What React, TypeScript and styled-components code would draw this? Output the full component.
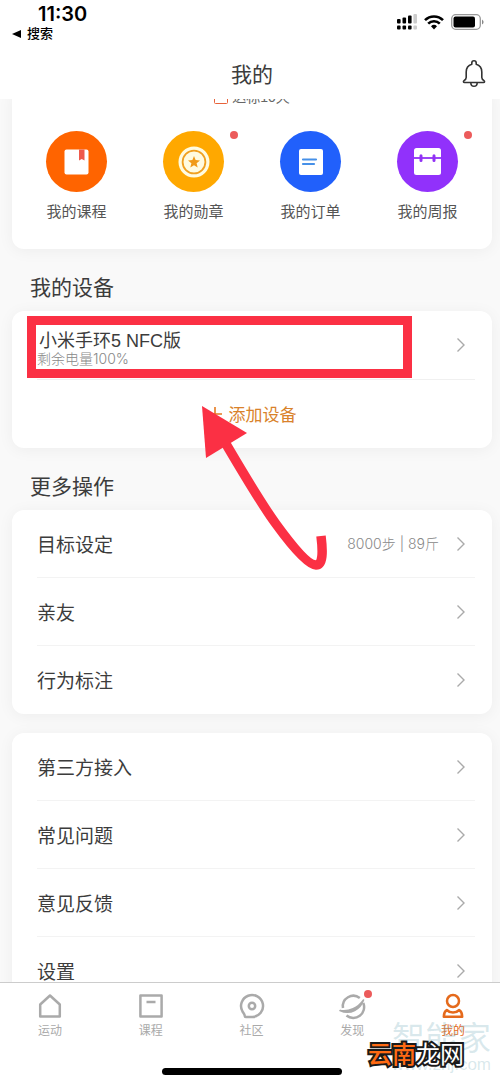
import React from 'react';
import styled, { createGlobalStyle } from 'styled-components';

const GlobalStyle = createGlobalStyle`
  *, *::before, *::after { box-sizing: border-box; }
  body {
    margin: 0;
    background: #fff;
    color: #3c3c3c;
    font-family: "Liberation Sans", "Noto Sans CJK SC", sans-serif;
  }
  button { font: inherit; color: inherit; background: none; border: 0; padding: 0; cursor: pointer; }
  a { color: inherit; text-decoration: none; }
  h1, h2, p, ul { margin: 0; padding: 0; font-weight: 400; }
  ul { list-style: none; }
  svg { display: block; flex: none; }
`;

const Screen = styled.div`
  position: relative;
  display: flex;
  flex-direction: column;
  height: 100vh;
  overflow: hidden;
`;

const StatusBar = styled.div`
  display: flex;
  justify-content: space-between;
  align-items: flex-start;
  height: 48px;
  padding: 2px 16px 0 12px;
  color: #000;
`;

const Clock = styled.div`
  padding-left: 26px;
  font: 600 20px/24px Inter, sans-serif;
`;

const BackLink = styled.a`
  display: flex;
  align-items: center;
  gap: 6px;
  font-size: 13px;
  line-height: 16px;
  font-weight: 500;
`;

const StatusIcons = styled.div`
  display: flex;
  align-items: center;
  gap: 7px;
  padding-top: 12px;
`;

const TitleBar = styled.header`
  display: grid;
  grid-template-columns: 40px 1fr 40px;
  align-items: center;
  height: 51px;
  padding: 0 6px 0 10px;
`;

const Title = styled.h1`
  grid-column: 2;
  padding-top: 2px;
  text-align: center;
  font-size: 21px;
  line-height: 30px;
`;

const BellButton = styled.button`
  display: flex;
  justify-content: center;
`;

const Content = styled.main`
  flex: 1;
  min-height: 0;
  overflow: hidden;
  padding: 0 8px 0 12px;
  background: #f9f9f9;
`;

const Card = styled.section<{ $gap?: number }>`
  position: relative;
  margin-top: ${({ $gap = 0 }) => $gap}px;
  border-radius: 12px;
  background: #fff;
  box-shadow: 0 2px 16px rgba(0, 0, 0, 0.05);
`;

const SummaryCard = styled(Card)`
  margin-top: -12px;
  padding: 0 6px 25px;
`;

const Streak = styled.p`
  display: flex;
  justify-content: center;
  align-items: center;
  gap: 4px;
  height: 20px;
  margin-bottom: 24px;
  font-size: 14px;
  line-height: 20px;
  color: #666;
`;

const Shortcuts = styled.ul`
  display: grid;
  grid-template-columns: repeat(4, 1fr);
`;

const Shortcut = styled.a`
  position: relative;
  display: flex;
  flex-direction: column;
  align-items: center;
  gap: 8px;
  font-size: 15px;
  line-height: 24px;
  color: #555;
`;

const Disc = styled.span<{ $color: string }>`
  position: relative;
  display: grid;
  place-items: center;
  width: 61px;
  height: 61px;
  border-radius: 50%;
  background: ${({ $color }) => $color};
`;

const Dot = styled.span`
  position: absolute;
  top: 0;
  right: -14px;
  width: 8px;
  height: 8px;
  border-radius: 50%;
  background: #ec5b5b;
`;

const SectionTitle = styled.h2`
  padding: 24px 0 8px 18px;
  font-size: 21px;
  line-height: 30px;
`;

const Row = styled.a`
  display: flex;
  align-items: center;
  height: 68px;
  margin: 0 17px 0 25px;
  padding-right: 9px;
  font-size: 19px;
  line-height: 28px;
  li + li > & { box-shadow: 0 -1px 0 #f3f3f3; }
`;

const RowLabel = styled.span`
  flex: 1;
  padding-top: 4px;
`;

const RowValue = styled.span`
  margin-right: 17px;
  font-family: Inter, "Noto Sans CJK SC", sans-serif;
  font-size: 14px;
  font-weight: 300;
  color: #888;
`;

const Device = styled.span`
  display: flex;
  flex: 1;
  flex-direction: column;
  padding-top: 8px;
`;

const DeviceName = styled.span`
  padding-left: 2px;
  font-size: 18px;
  line-height: 20px;
`;

const DeviceMeta = styled.span`
  font-family: Inter, "Noto Sans CJK SC", sans-serif;
  font-size: 14px;
  line-height: 16px;
  font-weight: 300;
  color: #888;
`;

const AddButton = styled.button`
  display: flex;
  justify-content: center;
  align-items: center;
  gap: 7px;
  width: 100%;
  height: 69px;
  font-size: 17px;
  color: #d9822b;
`;

const AddDivider = styled.hr`
  height: 1px;
  margin: 0 17px -1px 25px;
  border: 0;
  background: #f0f0f0;
`;

const Highlight = styled.div`
  position: absolute;
  top: 5px;
  left: 15px;
  right: 80px;
  height: 62px;
  border: 9px solid #fb3044;
  pointer-events: none;
`;

const Arrow = styled.svg`
  position: absolute;
  z-index: 2;
  top: 89px;
  left: 188px;
  pointer-events: none;
`;

const TabBar = styled.nav`
  display: flex;
  justify-content: space-between;
  height: 86px;
  padding: 9px 17px 0 20px;
  border-top: 1px solid #ccc;
`;

const Tab = styled.a<{ $active?: boolean }>`
  position: relative;
  display: flex;
  flex-direction: column;
  align-items: center;
  gap: 1px;
  width: 60px;
  font-size: 12px;
  line-height: 20px;
  color: ${({ $active }) => ($active ? '#e56a1c' : '#aaa')};
`;

const TabDot = styled(Dot)`
  top: -2px;
  right: 10px;
`;

const HomeIndicator = styled.div`
  width: 36%;
  height: 7px;
  margin: 0 auto 8px;
  border-radius: 4px;
  background: #000;
  transform: translateX(2px);
`;

const Watermark = styled.div`
  position: absolute;
  right: 9px;
  bottom: 8px;
  display: flex;
  flex-direction: column;
  align-items: flex-end;
  font-size: 33px;
  line-height: 32px;
  color: rgba(120, 175, 190, 0.28);
  pointer-events: none;
`;

const WatermarkUrl = styled.span`
  font-size: 17px;
  line-height: 20px;
`;

const Stamp = styled.div`
  position: absolute;
  right: 36px;
  bottom: 12px;
  font-size: 24px;
  line-height: 32px;
  color: #fff;
  -webkit-text-stroke: 4px #1a1a1a;
  paint-order: stroke fill;
  pointer-events: none;
`;

const StampAccent = styled.span`
  font-weight: 500;
  color: #ff6a13;
`;

const Chevron = () => (
  <svg width="10" height="16" viewBox="0 0 10 16" fill="none" stroke="#aaa" strokeWidth="1.4">
    <path d="M1.5 1.5 8 8l-6.500 6.500" />
  </svg>
);

const SignalIcon = () => (
  <svg width="20" height="16" viewBox="0 0 20 16">
    <g fill="#000">
      <rect x="0" y="5" width="3.600" height="4.500" rx="1" />
      <rect x="5.500" y="3.500" width="3.600" height="6" rx="1" />
      <rect x="11" y="1.500" width="3.600" height="8" rx="1" />
      <rect x="0" y="11.500" width="3.600" height="4" rx="1" />
      <rect x="5.500" y="11.500" width="3.600" height="4" rx="1" />
      <rect x="11" y="11.500" width="3.600" height="4" rx="1" />
    </g>
    <g fill="#ccc">
      <rect x="16.400" y="0" width="3.600" height="9.500" rx="1" />
      <rect x="16.400" y="11.500" width="3.600" height="4" rx="1" />
    </g>
  </svg>
);

const WifiIcon = () => (
  <svg width="20" height="16" viewBox="0 0 20 16" fill="none" stroke="#000" strokeWidth="2.600">
    <path d="M1 6.200a12.700 12.700 0 0 1 18 0M4.200 9.600a8.200 8.200 0 0 1 11.600 0" />
    <path d="M7 12.200a4.300 4.300 0 0 1 6 0L10 15.500z" fill="#000" stroke="none" />
  </svg>
);

const BatteryIcon = () => (
  <svg width="33" height="16" viewBox="0 0 33 16">
    <rect x="0.700" y="0.700" width="28.600" height="14.600" rx="4" fill="none" stroke="#999" strokeWidth="1.300" />
    <rect x="2.500" y="2.500" width="21.500" height="11" rx="2" fill="#000" />
    <path d="M31 5.500v5q1.600-1 1.600-2.500t-1.600-2.500z" fill="#888" />
  </svg>
);

const BellIcon = () => (
  <svg width="24" height="28" viewBox="0 0 24 28" fill="none" stroke="#333" strokeWidth="1.600" strokeLinejoin="round">
    <path d="M9.800 4.300V3a2.200 2.200 0 0 1 4.400 0v1.300c3.600 1 5.600 4 5.600 7.700v5.500c0 1.600.8 2.200 2.200 3.100.9.600.7 1.900-.5 1.900h-19c-1.200 0-1.400-1.300-.5-1.900 1.400-.9 2.200-1.500 2.200-3.100V12c0-3.700 2-6.700 5.600-7.700z" />
    <path d="M8.800 22.700c.1 2.300 1.400 3.600 3.200 3.600s3.100-1.300 3.200-3.600" />
  </svg>
);

const CourseIcon = () => (
  <svg width="25" height="26" viewBox="0 0 25 26">
    <rect x="0.500" y="0.500" width="24" height="25" rx="2" fill="#fff" />
    <path d="M15 .5h5.500v11l-2.750-1.500L15 11.500z" fill="#ef5a4c" />
  </svg>
);

const MedalIcon = () => (
  <svg width="32" height="32" viewBox="0 0 32 32">
    <circle cx="16" cy="16" r="15.500" fill="#fffbe0" />
    <circle cx="16" cy="16" r="11.400" fill="none" stroke="#f0a020" strokeWidth="1.800" />
    <path d="m16 10 1.600 4 4.400.4-3.400 2.800 1.100 4.300L16 19.200l-3.700 2.300 1.100-4.300-3.400-2.800 4.400-.4z" fill="#f09a18" />
  </svg>
);

const OrderIcon = () => (
  <svg width="24" height="26" viewBox="0 0 24 26">
    <rect width="24" height="26" rx="2" fill="#fff" />
    <path d="M4 10.500h13M4 15h11" stroke="#4690e8" strokeWidth="2.200" strokeLinecap="round" />
  </svg>
);

const ReportIcon = () => (
  <svg width="27" height="27" viewBox="0 0 27 27">
    <rect width="27" height="27" rx="2.500" fill="#fff" />
    <path d="M0 10h27" stroke="#9131f5" strokeWidth="1.800" />
    <path d="M7 7.800v4.600M20 7.800v4.600" stroke="#9131f5" strokeWidth="3" strokeLinecap="round" />
  </svg>
);

const CalendarIcon = () => (
  <svg width="14" height="14" viewBox="0 0 14 14" fill="none" stroke="#e8623a">
    <rect x="0.500" y="1.500" width="13" height="12" rx="1" />
    <path d="M0 5h14" />
  </svg>
);

const PlusIcon = () => (
  <svg width="14" height="14" viewBox="0 0 14 14" stroke="#e57a20" strokeWidth="1.600">
    <path d="M7 0v14M0 7h14" />
  </svg>
);

const TabIcon = ({ children }: { children: React.ReactNode }) => (
  <svg width="28" height="28" viewBox="0 0 28 28" fill="none" stroke="currentColor" strokeWidth="2.500" strokeLinejoin="round">
    {children}
  </svg>
);

const shortcuts = [
  { label: '我的课程', color: '#ff6400', icon: <CourseIcon />, dot: false },
  { label: '我的勋章', color: '#ffa800', icon: <MedalIcon />, dot: true },
  { label: '我的订单', color: '#2160fb', icon: <OrderIcon />, dot: false },
  { label: '我的周报', color: '#9131fb', icon: <ReportIcon />, dot: true },
];

const actions = [
  { label: '目标设定', value: '8000步 | 89斤' },
  { label: '亲友' },
  { label: '行为标注' },
];

const support: { label: string; value?: string }[] = [
  { label: '第三方接入' },
  { label: '常见问题' },
  { label: '意见反馈' },
  { label: '设置' },
];

const tabs = [
  {
    label: '运动',
    icon: <path d="M4.200 12.500 14 3.500l9.800 9v12H4.200z" />,
  },
  {
    label: '课程',
    icon: <path d="M3.400 3.400h21.200v21.200H3.400zM9.500 10h9" />,
  },
  {
    label: '社区',
    icon: (
      <>
        <path d="M7.800 25h6.700A11 11 0 1 0 4.500 19.500c1.200 1.800 2.300 3 2.300 4.500 0 .6.400 1 1 1z" />
        <circle cx="14" cy="14" r="3.200" />
      </>
    ),
  },
  {
    label: '发现',
    dot: true,
    icon: (
      <>
        <path d="M5 16A10.500 10.500 0 0 1 21.800 6" />
        <path d="M25.300 11A10.800 10.800 0 0 1 8.500 23.500" />
        <path d="M2 18.500c9 1.500 18-2.500 23.500-10.500-3 9-13 15.500-23.500 10.500z" strokeWidth="1.600" fill="currentColor" />
      </>
    ),
  },
  {
    label: '我的',
    active: true,
    icon: (
      <>
        <circle cx="14" cy="9" r="6" />
        <path d="M7.800 18c-2 1.300-3 3.200-3 6.700h18.400c0-3.500-1-5.400-3-6.700-1.700 1.700-3.700 2.600-6.200 2.600s-4.500-.9-6.200-2.600z" />
      </>
    ),
  },
];

const RowList = ({ items }: { items: { label: string; value?: string }[] }) => (
  <ul>
    {items.map(({ label, value }) => (
      <li key={label}>
        <Row href="#">
          <RowLabel>{label}</RowLabel>
          {value && <RowValue>{value}</RowValue>}
          <Chevron />
        </Row>
      </li>
    ))}
  </ul>
);

export default function App() {
  return (
    <Screen>
      <GlobalStyle />
      <StatusBar>
        <div>
          <Clock>11:30</Clock>
          <BackLink href="#">
            <svg width="9" height="8" viewBox="0 0 9 8"><path d="M0 4 9 0v8z" /></svg>
            搜索
          </BackLink>
        </div>
        <StatusIcons>
          <SignalIcon />
          <WifiIcon />
          <BatteryIcon />
        </StatusIcons>
      </StatusBar>
      <TitleBar>
        <Title>我的</Title>
        <BellButton aria-label="通知">
          <BellIcon />
        </BellButton>
      </TitleBar>

      <Content>
        <SummaryCard>
          <Streak><CalendarIcon />达标10天</Streak>
          <Shortcuts>
            {shortcuts.map(({ label, color, icon, dot }) => (
              <li key={label}>
                <Shortcut href="#">
                  <Disc $color={color}>
                    {icon}
                    {dot && <Dot />}
                  </Disc>
                  {label}
                </Shortcut>
              </li>
            ))}
          </Shortcuts>
        </SummaryCard>

        <SectionTitle>我的设备</SectionTitle>
        <Card>
          <Row href="#">
            <Device>
              <DeviceName>小米手环5 NFC版</DeviceName>
              <DeviceMeta>剩余电量100%</DeviceMeta>
            </Device>
            <Chevron />
          </Row>
          <AddDivider />
          <AddButton><PlusIcon />添加设备</AddButton>
          <Highlight />
          <Arrow width="132" height="176" viewBox="0 0 132 176">
            <path d="M26 44C46 78 62 105 76 124C92 146 108 165 116 165C123 165 123 152 121 136" fill="none" stroke="#fb3044" strokeWidth="9.500" />
            <path d="M2 6 47 33 6 58z" fill="#fb3044" />
          </Arrow>
        </Card>

        <SectionTitle>更多操作</SectionTitle>
        <Card>
          <RowList items={actions} />
        </Card>
        <Card $gap={19}>
          <RowList items={support} />
        </Card>
      </Content>

      <TabBar>
        {tabs.map(({ label, icon, active, dot }) => (
          <Tab key={label} href="#" $active={active}>
            <TabIcon>{icon}</TabIcon>
            {label}
            {dot && <TabDot />}
          </Tab>
        ))}
      </TabBar>
      <HomeIndicator />
      <Watermark>
        智能家
        <WatermarkUrl>www.znj.com</WatermarkUrl>
      </Watermark>
      <Stamp><StampAccent>云南</StampAccent>龙网</Stamp>
    </Screen>
  );
}
